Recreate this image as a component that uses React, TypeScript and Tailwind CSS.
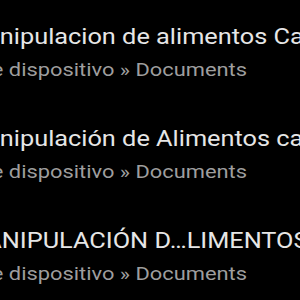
import React from "react";

const items = [
  { title: "Manipulacion de alimentos Capitulo 1.pdf", sub: "Este dispositivo » Documents", tl: "ml-[-36px]" },
  { title: "Manipulación de Alimentos capitulo 2.pdf", sub: "Este dispositivo » Documents", tl: "ml-[-36px]" },
  { title: "MANIPULACIÓN D…LIMENTOS CAP 3.pdf", sub: "Este dispositivo » Documents", tl: "ml-[-37px]" },
];

export default function App() {
  return (
    <div
      className="w-[300px] h-[300px] bg-black overflow-hidden flex flex-col pt-[23px] gap-[43px]"
      style={{ fontFamily: "Roboto, 'Noto Sans', sans-serif" }}
    >
      {items.map((it, i) => (
        <div key={i} className="flex flex-col whitespace-nowrap gap-[7px]">
          <div className={`text-[22px] leading-[28px] text-[#e6e6e6] origin-left scale-x-[1.15] ${it.tl}`}>
            {it.title}
          </div>
          <div className="text-[19px] leading-[24px] text-[#9e9e9e] origin-left scale-x-[1.15] ml-[-39px]">
            {it.sub}
          </div>
        </div>
      ))}
    </div>
  );
}
